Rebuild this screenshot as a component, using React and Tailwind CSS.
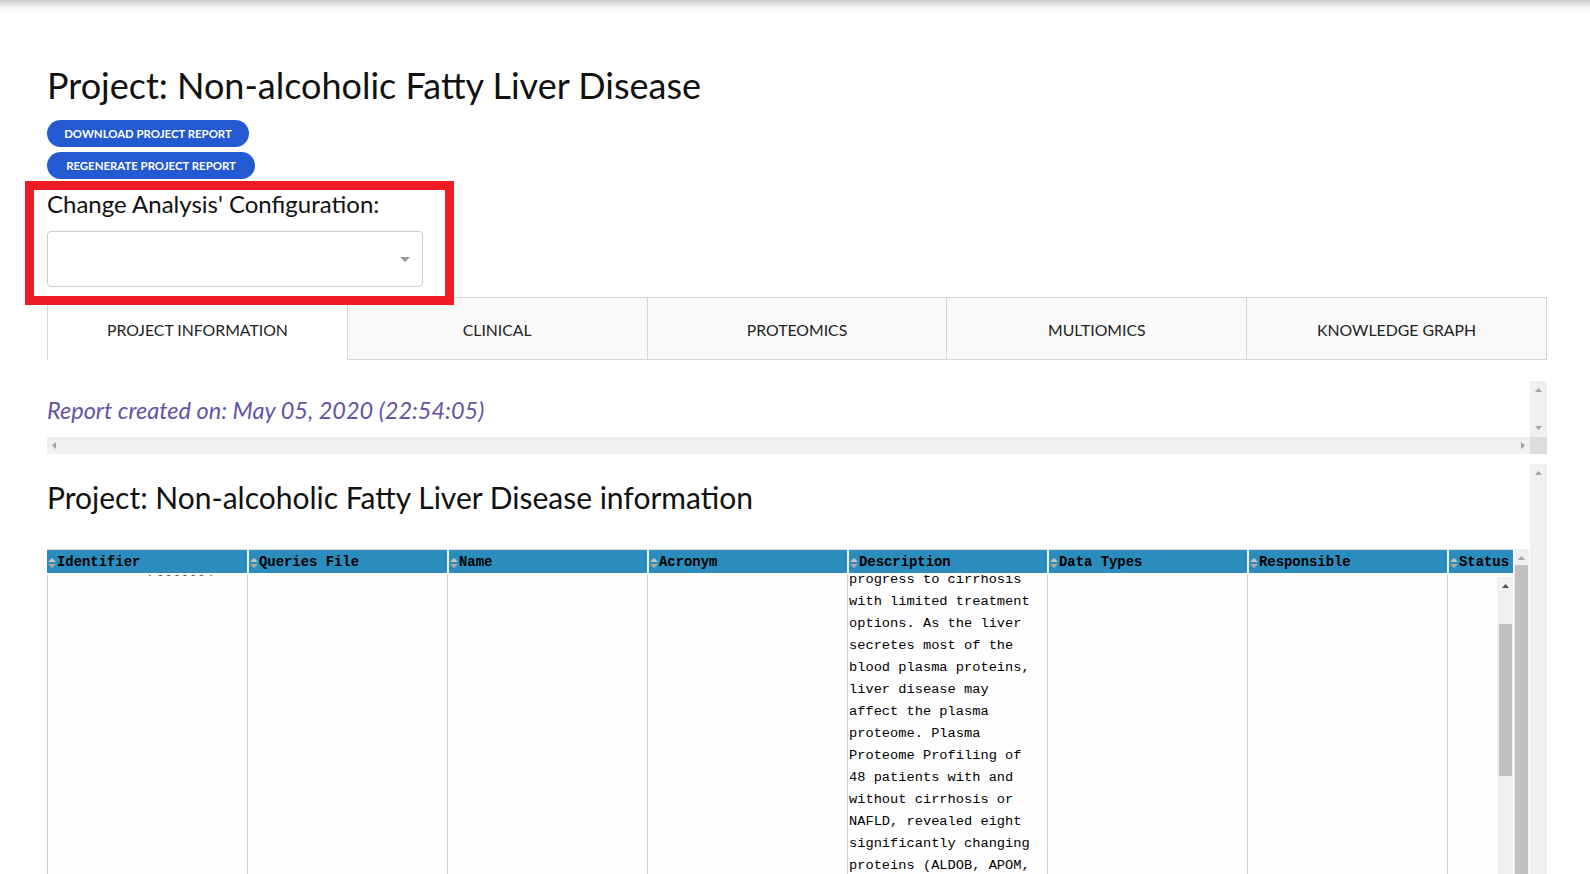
import React from "react";

const COLUMNS = ["Identifier", "Queries File", "Name", "Acronym", "Description", "Data Types", "Responsible"];

const DESCRIPTION = [
  "progress to cirrhosis",
  "with limited treatment",
  "options. As the liver",
  "secretes most of the",
  "blood plasma proteins,",
  "liver disease may",
  "affect the plasma",
  "proteome. Plasma",
  "Proteome Profiling of",
  "48 patients with and",
  "without cirrhosis or",
  "NAFLD, revealed eight",
  "significantly changing",
  "proteins (ALDOB, APOM,",
  "APOA4, C7, LGALS3BP,",
];

const TABS = ["PROJECT INFORMATION", "CLINICAL", "PROTEOMICS", "MULTIOMICS", "KNOWLEDGE GRAPH"];

// small scrollbar / caret triangles
function Tri({ dir = "up", color = "#a3a3a3" }) {
  const vertical = dir === "up" || dir === "down";
  const points = {
    up: "0,4 3.5,0 7,4",
    down: "0,0 7,0 3.5,4",
    left: "4,0 4,7 0,3.5",
    right: "0,0 0,7 4,3.5",
  }[dir];
  return (
    <svg width={vertical ? 7 : 4} height={vertical ? 4 : 7} viewBox={vertical ? "0 0 7 4" : "0 0 4 7"}>
      <polygon points={points} fill={color} />
    </svg>
  );
}

function SortIcon() {
  return (
    <svg width="8" height="12" viewBox="0 0 8 12" className="shrink-0">
      <polygon points="0,5 4,1 8,5" fill="#c4c4c4" />
      <polygon points="0,7 8,7 4,11" fill="#a9a9a9" />
    </svg>
  );
}

function HeaderCell({ label, width }) {
  return (
    <div className={`${width} flex h-full items-center border-l-2 border-[#f2f2f2] pl-[1px] pt-[2px] first:border-l-0`}>
      <SortIcon />
      <span className="ml-[1px] font-['Liberation_Mono',monospace] text-[13.9px] font-bold text-black">{label}</span>
    </div>
  );
}

export default function App() {
  return (
    <div className="relative h-[874px] overflow-hidden bg-white font-['Lato','Open_Sans',sans-serif] text-[#111]">
      {/* top shadow from the nav bar */}
      <div className="h-[14px] bg-linear-to-b from-[#c9c9c9] via-[#f2f2f2] to-white" />

      <div className="pl-[47px] pr-[43px]">
        <h1 className="mt-[50px] text-[36px] leading-[42px] font-normal">Project: Non-alcoholic Fatty Liver Disease</h1>

        <button className="mt-[14px] flex h-[27px] w-[202px] items-center justify-center rounded-full bg-[#2359d1] text-[11.4px] font-bold text-white">
          DOWNLOAD PROJECT REPORT
        </button>
        <button className="mt-[5px] flex h-[27px] w-[208px] items-center justify-center rounded-full bg-[#2359d1] text-[11.4px] font-bold text-white">
          REGENERATE PROJECT REPORT
        </button>

        <div className="mt-[11px] text-[24px] leading-[28px]">Change Analysis' Configuration:</div>

        <div className="mt-[13px] flex h-[56px] w-[376px] items-center justify-end rounded-[4px] border border-[#cccccc] bg-white pr-[12px]">
          <svg width="10" height="5" viewBox="0 0 10 5">
            <polygon points="0,0 10,0 5,5" fill="#999999" />
          </svg>
        </div>

        {/* tabs */}
        <div className="mt-[10px] flex h-[63px]">
          {TABS.map((tab, i) => (
            <div
              key={tab}
              className={
                i === 0
                  ? "flex flex-1 items-center justify-center border-l border-[#d6d6d6] bg-white pt-[3px] text-[15.8px] text-[#222]"
                  : i === 1
                  ? "flex flex-1 items-center justify-center border border-[#d6d6d6] bg-[#f9f9f9] pt-[3px] text-[15.8px] text-[#222]"
                  : "flex flex-1 items-center justify-center border-y border-r border-[#d6d6d6] bg-[#f9f9f9] pt-[3px] text-[15.8px] text-[#222]"
              }
            >
              {tab}
            </div>
          ))}
        </div>

        {/* report date box with scrollbars */}
        <div className="mt-[21px] flex">
          <div className="flex flex-1 flex-col">
            <div className="h-[56px] pt-[15px]">
              <p className="text-[23.5px] leading-[28px] italic text-[#6553a3]">Report created on: May 05, 2020 (22:54:05)</p>
            </div>
            <div className="flex h-[17px] items-center justify-between bg-[#f0f0f0] px-[5px]">
              <Tri dir="left" />
              <Tri dir="right" />
            </div>
          </div>
          <div className="flex w-[17px] flex-col">
            <div className="flex h-[56px] flex-col items-center justify-between bg-[#f0f0f0] py-[7px]">
              <Tri dir="up" />
              <Tri dir="down" />
            </div>
            <div className="h-[17px] bg-[#dcdcdc]" />
          </div>
        </div>

        {/* project information */}
        <div className="mt-[10px] flex h-[410px]">
          <div className="flex min-w-0 flex-1 flex-col">
            <h2 className="mt-[15px] text-[30px] leading-[36px] font-normal">
              Project: Non-alcoholic Fatty Liver Disease information
            </h2>

            <div className="mt-[34px] flex min-h-0 flex-1">
              <div className="flex w-[1466px] flex-col border-t border-[#dddddd]">
                <div className="flex h-[25px] border-b-2 border-white bg-[#2b8cbe]">
                  {COLUMNS.map((c) => (
                    <HeaderCell key={c} label={c} width="w-[200px]" />
                  ))}
                  <HeaderCell label="Status" width="w-[66px]" />
                </div>

                <div className="flex min-h-0 flex-1 font-['Liberation_Mono',monospace] text-[13.7px] leading-[22px] text-black">
                  <div className="w-[200px] overflow-hidden border-l border-[#cccccc] bg-[#fefefe]">
                    <div className="-mt-[13px] pl-[100px] text-[#444]">P0000004</div>
                  </div>
                  <div className="w-[200px] border-l border-[#cccccc] bg-[#fefefe]" />
                  <div className="w-[200px] border-l border-[#cccccc] bg-[#fefefe]" />
                  <div className="w-[200px] border-l border-[#cccccc] bg-[#fefefe]" />
                  <div className="w-[200px] overflow-hidden border-l border-[#cccccc] bg-[#fefefe] pl-[1px]">
                    <div className="-mt-[6px]">
                      {DESCRIPTION.map((line) => (
                        <div key={line} className="whitespace-pre">{line}</div>
                      ))}
                    </div>
                  </div>
                  <div className="w-[200px] border-l border-[#cccccc] bg-[#fefefe]" />
                  <div className="w-[200px] border-l border-[#cccccc] bg-[#fefefe]" />
                  <div className="flex w-[66px] justify-end border-l border-[#cccccc] bg-[#fefefe]">
                    <div className="mt-[2px] flex w-[16px] flex-col items-center bg-[#f0f0f0]">
                      <div className="mt-[7px]">
                        <Tri dir="up" color="#505050" />
                      </div>
                      <div className="mt-[36px] h-[152px] w-[13px] bg-[#c1c1c1]" />
                    </div>
                  </div>
                </div>
              </div>

              {/* outer table scrollbar */}
              <div className="ml-[1px] flex w-[15px] flex-col items-center bg-[#f0f0f0]">
                <div className="mt-[7px]">
                  <Tri dir="up" />
                </div>
                <div className="mt-[5px] w-[13px] flex-1 bg-[#c1c1c1]" />
              </div>
            </div>
          </div>

          <div className="flex w-[17px] flex-col items-center bg-[#f0f0f0] pt-[7px]">
            <Tri dir="up" />
          </div>
        </div>
      </div>

      {/* highlight annotation */}
      <div className="absolute left-[25px] top-[181px] h-[124px] w-[429px] border-[9px] border-[#ed1c24]" />
    </div>
  );
}
